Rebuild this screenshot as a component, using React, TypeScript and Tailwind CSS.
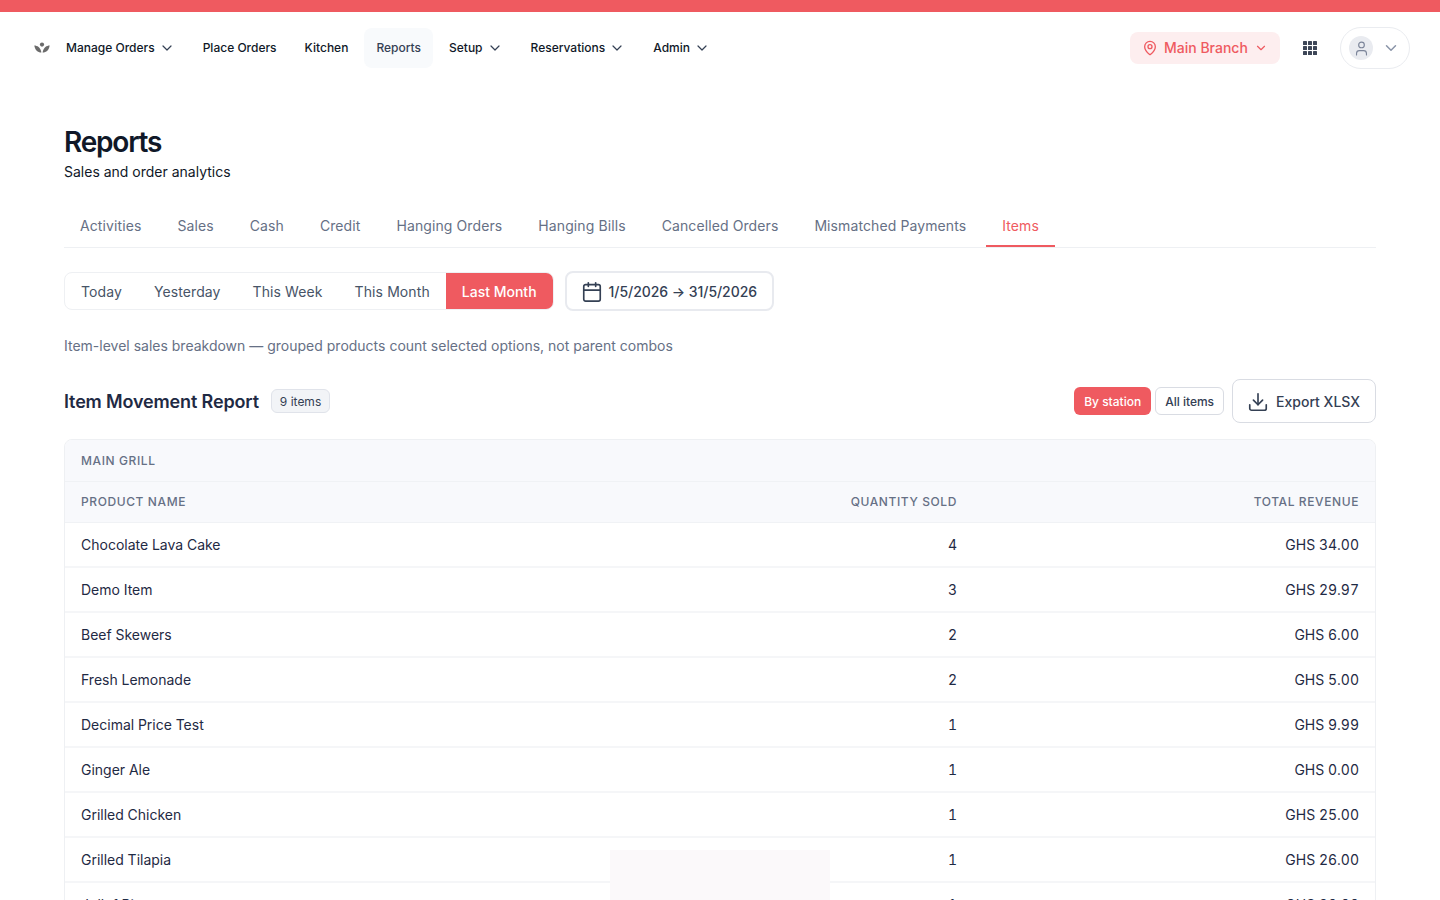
import { Calendar, ChevronDown, Download, MapPin, User } from "lucide-react";

const nav = [
  { label: "Manage Orders", menu: true },
  { label: "Place Orders" },
  { label: "Kitchen" },
  { label: "Reports", active: true },
  { label: "Setup", menu: true },
  { label: "Reservations", menu: true },
  { label: "Admin", menu: true },
];

const tabs = ["Activities", "Sales", "Cash", "Credit", "Hanging Orders", "Hanging Bills", "Cancelled Orders", "Mismatched Payments", "Items"];
const ranges = ["Today", "Yesterday", "This Week", "This Month", "Last Month"];

const rows = [
  ["Chocolate Lava Cake", "4", "GHS 34.00"],
  ["Demo Item", "3", "GHS 29.97"],
  ["Beef Skewers", "2", "GHS 6.00"],
  ["Fresh Lemonade", "2", "GHS 5.00"],
  ["Decimal Price Test", "1", "GHS 9.99"],
  ["Ginger Ale", "1", "GHS 0.00"],
  ["Grilled Chicken", "1", "GHS 25.00"],
  ["Grilled Tilapia", "1", "GHS 26.00"],
  ["Jollof Rice", "1", "GHS 30.00"],
];

function Logo() {
  return (
    <svg viewBox="0 0 16 12" className="w-4 h-3 text-[#6b6b6b]" fill="currentColor">
      <circle cx="8" cy="2.6" r="2.1" />
      <path d="M0.3 3.6C3.2 3.6 6.6 5.5 7.4 10.6 3.6 10.6 1 8 0.3 3.6Z" />
      <path d="M15.7 3.6C12.8 3.6 9.4 5.5 8.6 10.6 12.4 10.6 15 8 15.7 3.6Z" />
    </svg>
  );
}

function GridDots() {
  const cells = [0, 5, 10];
  return (
    <svg viewBox="0 0 14 14" className="w-[14px] h-[14px] ml-[23px] text-[#3d4657]" fill="currentColor">
      {cells.map((y) => cells.map((x) => <rect key={`${x}-${y}`} x={x} y={y} width="4" height="4" rx="0.6" />))}
    </svg>
  );
}

export default function App() {
  return (
    <div className="h-screen overflow-hidden bg-white relative font-['Inter',sans-serif] text-[#1f2a44]">
      <div className="h-3 bg-[#ef5a60]" />

      {/* Top navigation */}
      <header className="h-[72px] pl-[34px] pr-[30px] flex items-center">
        <Logo />
        <nav className="ml-1 flex items-center gap-1">
          {nav.map((item) => (
            <div
              key={item.label}
              className={`h-10 px-3 flex items-center gap-1 rounded-lg text-xs font-medium ${item.active ? "bg-[#f8fafc] text-[#344054]" : "text-[#101828]"}`}
            >
              {item.label}
              {item.menu && <ChevronDown className="w-4 h-4 text-[#344054]" strokeWidth={1.8} />}
            </div>
          ))}
        </nav>
        <div className="ml-auto flex items-center">
          <div className="h-8 w-[150px] pl-3 rounded-lg bg-[#fdeeef] text-[#ef5a60] text-sm font-medium flex items-center gap-[6px]">
            <MapPin className="w-4 h-4" strokeWidth={2} />
            Main Branch
            <ChevronDown className="w-[14px] h-[14px]" strokeWidth={2} />
          </div>
          <GridDots />
          <div className="ml-[23px] w-[70px] h-[42px] pl-2 rounded-full border border-[#eaecf0] flex items-center gap-[9px]">
            <div className="w-6 h-6 rounded-full bg-[#e9ebf0] flex items-center justify-center">
              <User className="w-[17px] h-[17px] text-[#7b8499]" strokeWidth={1.6} />
            </div>
            <ChevronDown className="w-[18px] h-[18px] text-[#8a94a8]" strokeWidth={2} />
          </div>
        </div>
      </header>

      <main className="px-16 pt-[38px]">
        <h1 className="text-[28px] leading-[40px] font-semibold tracking-[-1.2px] text-[#101828]">Reports</h1>
        <p className="text-sm leading-5 text-[#101828]">Sales and order analytics</p>

        {/* Report tabs */}
        <div className="mt-[22px] flex gap-1 border-b border-[#eef0f3]">
          {tabs.map((tab) => (
            <div
              key={tab}
              className={`h-[43px] px-4 pt-[3px] flex items-center text-sm tracking-[0.1px] border-b-2 ${tab === "Items" ? "border-[#ef5a60] text-[#ef5a60]" : "border-transparent text-[#667085]"}`}
            >
              {tab}
            </div>
          ))}
        </div>

        {/* Date filters */}
        <div className="mt-[23px] flex items-center gap-[11px]">
          <div className="h-[38px] flex rounded-lg border border-[#eef0f3] overflow-hidden">
            {ranges.map((r) => (
              <div
                key={r}
                className={`px-4 pt-[2px] flex items-center text-sm ${r === "Last Month" ? "bg-[#ef5a60] text-white font-medium" : "text-[#475467] tracking-[0.1px]"}`}
              >
                {r}
              </div>
            ))}
          </div>
          <div className="h-10 pl-[14px] pr-[15px] pt-[2px] rounded-lg border-2 border-[#e8eaef] flex items-center gap-[6px] text-sm font-medium tracking-[-0.05px] text-[#344054]">
            <Calendar className="w-[22px] h-[22px]" strokeWidth={1.8} />
            1/5/2026 → 31/5/2026
          </div>
        </div>

        <p className="mt-[25px] text-sm leading-5 text-[#667085]">
          Item-level sales breakdown — grouped products count selected options, not parent combos
        </p>

        {/* Section heading */}
        <div className="mt-[23px] flex items-center">
          <h2 className="pt-[2px] text-lg font-semibold tracking-[-0.15px] text-[#1f2a44]">Item Movement Report</h2>
          <span className="ml-3 h-6 px-2 pt-[2px] rounded-md border border-[#e0e3ea] bg-[#f2f4f7] flex items-center text-xs text-[#344054]">9 items</span>
          <div className="ml-auto flex items-center">
            <span className="h-7 px-[10px] pt-[2px] rounded-md bg-[#ef5a60] text-white text-xs font-medium flex items-center">By station</span>
            <span className="ml-1 h-7 px-[9px] pt-[2px] rounded-md border border-[#d9dce3] text-[#344054] text-xs font-medium flex items-center">All items</span>
            <div className="ml-2 h-11 pl-[14px] pr-[15px] pt-[2px] rounded-lg border border-[#d9dce3] flex items-center gap-[7px] text-sm font-medium text-[#344054]">
              <Download className="w-[22px] h-[22px]" strokeWidth={1.8} />
              Export XLSX
            </div>
          </div>
        </div>

        {/* Item table */}
        <div className="mt-4 rounded-lg border border-[#eef0f3] overflow-hidden">
          <div className="h-[42px] px-4 flex items-center bg-[#f8f9fc] border-b border-[#f0f2f5] text-xs font-medium tracking-[0.6px] text-[#667085]">
            MAIN GRILL
          </div>
          <div className="h-[41px] px-4 grid grid-cols-[1fr_auto_402px] items-center bg-[#f8f9fc] border-b border-[#f0f2f5] text-xs font-medium tracking-[0.6px] text-[#667085]">
            <span>PRODUCT NAME</span>
            <span className="text-right">QUANTITY SOLD</span>
            <span className="text-right">TOTAL REVENUE</span>
          </div>
          {rows.map((row) => (
            <div key={row[0]} className="h-[45px] px-4 grid grid-cols-[1fr_auto_402px] items-center border-b-2 border-[#f5f6f8] text-sm tabular-nums text-[#1f2a44]">
              <span>{row[0]}</span>
              <span className="text-right">{row[1]}</span>
              <span className="text-right">{row[2]}</span>
            </div>
          ))}
        </div>
      </main>

      {/* Toast placeholder overlay */}
      <div className="absolute left-[610px] top-[850px] w-[220px] h-[50px] bg-[#fbf9fa]" />
    </div>
  );
}
